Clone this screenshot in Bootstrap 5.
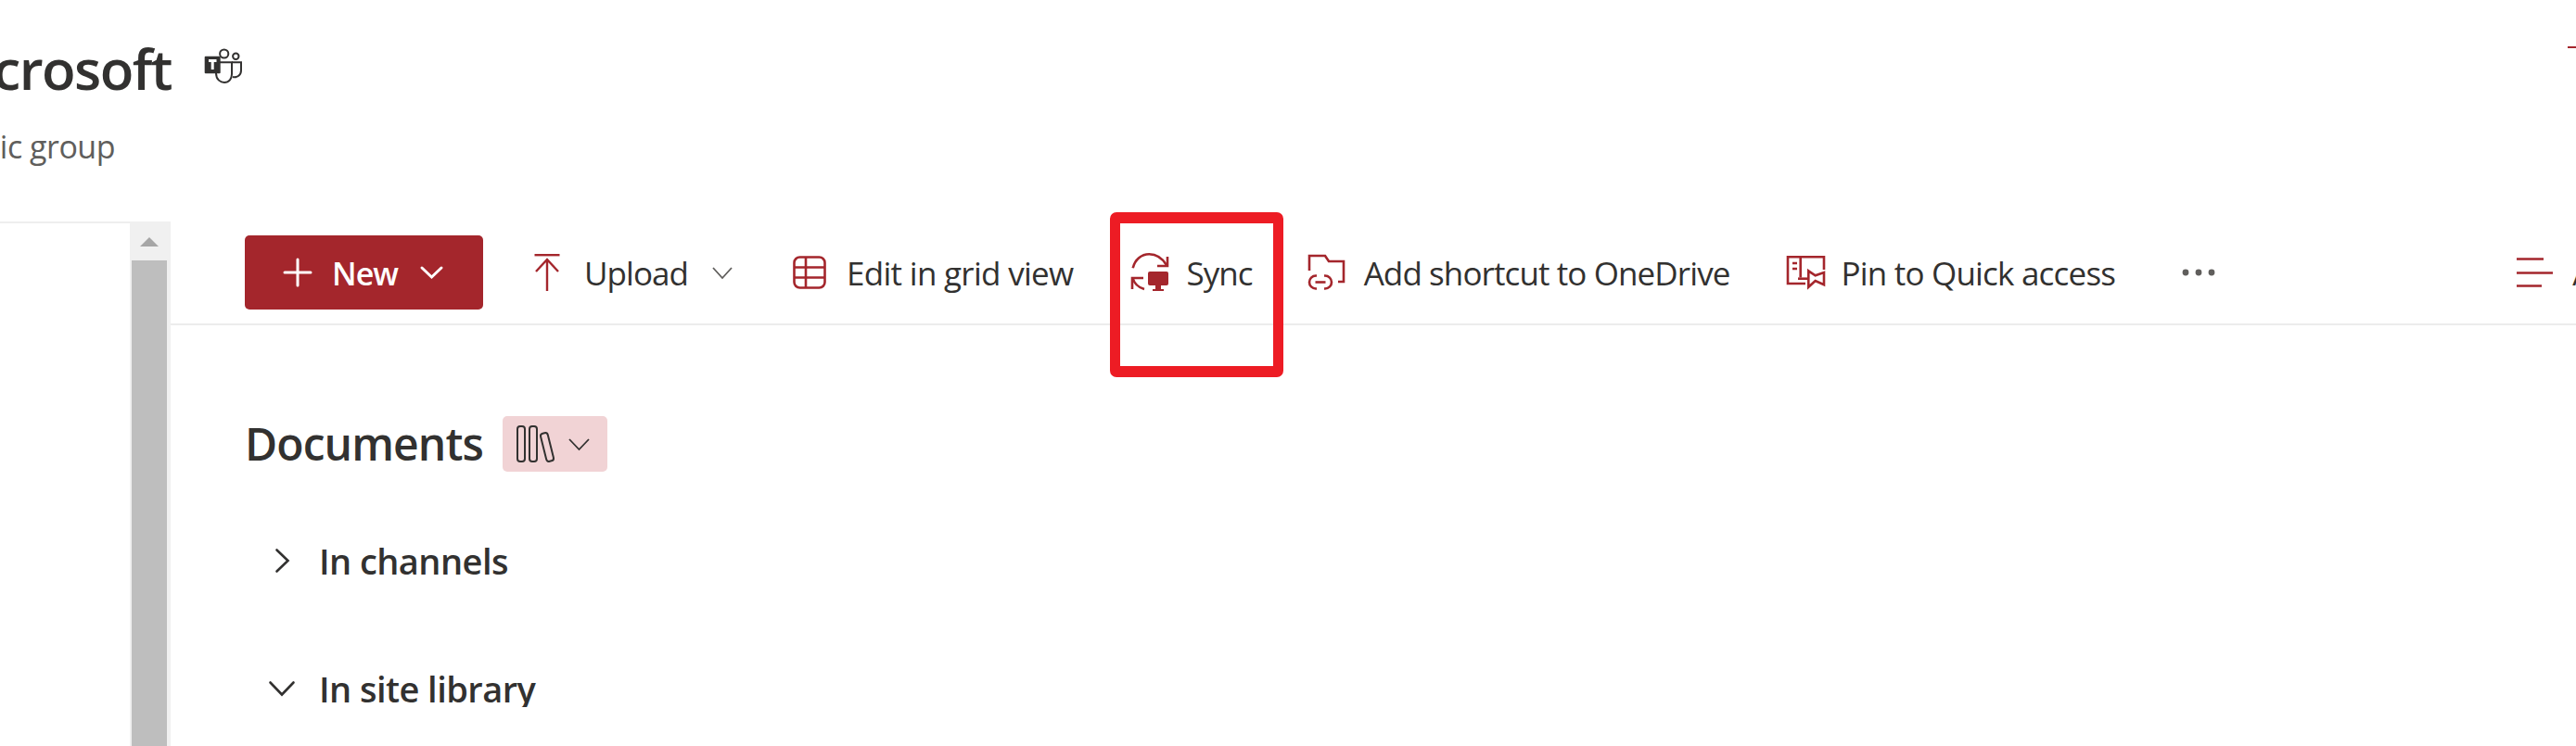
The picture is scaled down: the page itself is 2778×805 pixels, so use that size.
<!DOCTYPE html>
<html lang="en">

<head>
    <meta charset="UTF-8" />
    <title>Documents</title>
    <link href="https://cdn.jsdelivr.net/npm/bootstrap@5.3.3/dist/css/bootstrap.min.css" rel="stylesheet">
    <style>
        html, body { height: 805px; overflow: hidden; background: #fff; }
        body { font-family: "Open Sans", "Liberation Sans", sans-serif; color: #323130; }
        svg { display: block; flex-shrink: 0; overflow: visible; }

        .sp-page { position: relative; width: 2778px; height: 805px; overflow: hidden; }

        /* site header */
        .sp-header { height: 239px; }
        .sp-title-row { height: 64px; margin-top: 42px; }
        .sp-title-clip { width: 185px; white-space: nowrap; font-size: 60px; font-weight: 600; line-height: 64px; letter-spacing: -1.6px; }
        .sp-teams { margin-left: 33px; margin-top: 8px; }
        .sp-sub-clip { width: 124px; white-space: nowrap; font-size: 34px; line-height: 46px; margin-top: 29px; color: #605e5c; letter-spacing: -.5px; }
        .sp-corner { width: 9px; height: 2px; background: #a4262c; margin-top: 50px; }

        /* left panel */
        .sp-main { height: 566px; }
        .sp-nav { width: 140px; border-top: 2px solid #eee; }
        .sp-scroll { width: 44px; background: #f0f0f0; }
        .sp-scroll-up { height: 42px; padding-top: 17px; }
        .sp-scroll-tri { width: 0; height: 0; margin-left: 11px; border-left: 10px solid transparent; border-right: 10px solid transparent; border-bottom: 10px solid #a6a6a6; }
        .sp-scroll-thumb { width: 38px; margin-left: 2px; background: #bebebe; }

        /* command bar */
        .sp-content { width: 2594px; }
        .sp-bar { height: 112px; padding-left: 80px; border-bottom: 2px solid #ececec; white-space: nowrap; overflow: hidden; padding-top: 15px; padding-bottom: 15px; }
        .sp-new { width: 257px; height: 80px; background: #a4262c; border-radius: 5px; color: #fff; font-size: 34px; font-weight: 600; letter-spacing: -1px; padding: 0 0 0 41px; border: 0; }
        .sp-new span { margin-left: 21px; margin-right: 24px; padding-top: 3px; }
        .sp-cmd { font-size: 35px; letter-spacing: -.95px; line-height: 46px; flex-shrink: 0; }
        .sp-cmd span { padding-top: 2px; }
        .sp-cmd-upload { margin-left: 55px; }
        .sp-cmd-upload span { margin-left: 26px; margin-right: 26px; }
        .sp-cmd-grid { margin-left: 65px; }
        .sp-cmd-grid span { margin-left: 22px; letter-spacing: -.7px; }
        .sp-cmd-sync { margin-left: 62px; }
        .sp-cmd-short { margin-left: 58px; }
        .sp-cmd-short span { margin-left: 18px; letter-spacing: -.9px; }
        .sp-cmd-pin { margin-left: 60px; }
        .sp-cmd-pin span { letter-spacing: -.8px; }
        .sp-label-gap { margin-left: 16px; }
        .sp-more { margin-left: 72px; flex-shrink: 0; }
        .sp-sort { margin-left: 325px; }
        .sp-sort span { margin-left: 20px; }

        /* document area */
        .sp-docs { height: 412px; overflow: hidden; padding-left: 80px; padding-top: 98px; }
        .sp-doc-title { font-size: 48px; font-weight: 600; line-height: 60px; letter-spacing: -.9px; margin: 0; }
        .sp-view-pill { width: 113px; height: 60px; margin-left: 21px; background: #f1d3d5; border-radius: 5px; padding-left: 15px; }
        .sp-group { height: 60px; margin-top: 66px; padding-left: 26px; font-size: 38px; font-weight: 600; letter-spacing: -.55px; }
        .sp-group + .sp-group { margin-top: 78px; }
        .sp-group-ico { width: 28px; margin-right: 26px; }

        /* red annotation around Sync */
        .sp-callout { position: absolute; left: 1197px; top: 229px; width: 187px; height: 178px; border: solid #ed1c24; border-width: 12px 11px; border-radius: 7px; }
    </style>
</head>

<body>
    <div class="sp-page">
        <!-- header -->
        <div class="sp-header d-flex">
            <div>
                <div class="sp-title-row d-flex">
                    <div class="sp-title-clip d-flex justify-content-end">Microsoft</div>
                    <svg class="sp-teams" width="44" height="42" viewBox="0 0 44 42" fill="none" stroke="#323130" stroke-width="2">
                        <circle cx="23.7" cy="8" r="4.6" />
                        <circle cx="36.3" cy="10.7" r="3.2" />
                        <path d="M19 17.3H32V30C32 35 29 39 24 39C20 39 15 36 15 29" />
                        <path d="M32 17.3H42V26C42 31 38 34 33 33" />
                        <rect x="2.7" y="10.7" width="17" height="18.5" rx="1" fill="#323130" stroke="none" />
                        <path d="M7 15.5H15.5M11.2 15.5V25" stroke="#fff" stroke-width="3" />
                    </svg>
                </div>
                <div class="sp-sub-clip d-flex justify-content-end">Public group</div>
            </div>
            <div class="sp-corner ms-auto"></div>
        </div>

        <div class="sp-main d-flex">
            <!-- left panel -->
            <div class="sp-nav"></div>
            <div class="sp-scroll d-flex flex-column">
                <div class="sp-scroll-up">
                    <div class="sp-scroll-tri"></div>
                </div>
                <div class="sp-scroll-thumb flex-grow-1"></div>
            </div>

            <div class="sp-content">
                <!-- command bar -->
                <div class="sp-bar d-flex align-items-center">
                    <button type="button" class="sp-new btn d-flex align-items-center flex-shrink-0">
                        <svg width="32" height="32" viewBox="0 0 32 32" fill="none" stroke="#fff" stroke-width="3" stroke-linecap="round">
                            <path d="M16 2V30M2 16H30" />
                        </svg>
                        <span>New</span>
                        <svg width="25" height="14" viewBox="0 0 25 14" fill="none" stroke="#fff" stroke-width="3" stroke-linecap="round">
                            <path d="M2 2L12.5 12L23 2" />
                        </svg>
                    </button>

                    <div class="sp-cmd sp-cmd-upload d-flex align-items-center">
                        <svg width="28" height="40" viewBox="0 0 28 40" fill="none" stroke="#a4262c" stroke-width="2.4">
                            <path d="M0.5 1.2H27.5" />
                            <path d="M14 6V40M2 19L14 6L26 19" />
                        </svg>
                        <span>Upload</span>
                        <svg width="22" height="13" viewBox="0 0 22 13" fill="none" stroke="#605e5c" stroke-width="1.8">
                            <path d="M1 1L11 12L21 1" />
                        </svg>
                    </div>

                    <div class="sp-cmd sp-cmd-grid d-flex align-items-center">
                        <svg width="36" height="36" viewBox="0 0 36 36" fill="none" stroke="#a4262c" stroke-width="2.6">
                            <rect x="1.5" y="1.5" width="33" height="33" rx="6" />
                            <path d="M1.5 12.5H34.5M1.5 23.5H34.5M14 1.5V34.5" />
                        </svg>
                        <span>Edit in grid view</span>
                    </div>

                    <div class="sp-cmd sp-cmd-sync d-flex align-items-center">
                        <svg width="44" height="44" viewBox="0 0 44 44" fill="none" stroke="#a4262c" stroke-width="2.6">
                            <path d="M2.7 17.3C5 8 12 2.3 20.3 2.3C27 2.3 34 6 39 14" />
                            <path d="M40 5V15H29" />
                            <path d="M15 40C8 38 4 33 2.5 28" />
                            <path d="M14 28H2V40" />
                            <rect x="19" y="21" width="22" height="15" rx="2" fill="#a4262c" stroke="none" />
                            <path d="M27 36H33V40H36V42H24V40H27Z" fill="#a4262c" stroke="none" />
                        </svg>
                        <span class="sp-label-gap">Sync</span>
                    </div>

                    <div class="sp-cmd sp-cmd-short d-flex align-items-center">
                        <svg width="44" height="42" viewBox="0 0 44 42" fill="none" stroke="#a4262c" stroke-width="2.6">
                            <path d="M3 19V3H20L24 9H40V31H34" />
                            <path d="M11 24.5H10A7 7 0 0 0 10 38.5H11" />
                            <path d="M19 24.5H20A7 7 0 0 1 20 38.5H19" />
                            <path d="M9.5 31.5H20.5" />
                        </svg>
                        <span>Add shortcut to OneDrive</span>
                    </div>

                    <div class="sp-cmd sp-cmd-pin d-flex align-items-center">
                        <svg width="44" height="38" viewBox="0 0 44 38" fill="none" stroke="#a4262c" stroke-width="2.6">
                            <path d="M41 16V2.3H2V31H21" />
                            <path d="M15.7 2.3V24.5" />
                            <path d="M7 9H12M7 15H12" />
                            <path d="M13 25.7H25" />
                            <path d="M24.3 17.3L31.7 22.3L41 19V32.3L31.7 28L24.3 34.7Z" fill="#fff" />
                        </svg>
                        <span class="sp-label-gap">Pin to Quick access</span>
                    </div>

                    <svg class="sp-more" width="36" height="8" viewBox="0 0 36 8" fill="#605e5c">
                        <circle cx="4" cy="4" r="3.4" />
                        <circle cx="18" cy="4" r="3.4" />
                        <circle cx="32" cy="4" r="3.4" />
                    </svg>

                    <div class="sp-cmd sp-sort d-flex align-items-center">
                        <svg width="40" height="32" viewBox="0 0 40 32" fill="none" stroke="#a4262c" stroke-width="2.6">
                            <path d="M0 1.5H29M0 16.5H39M0 30.5H27" />
                        </svg>
                        <span>All Documents</span>
                    </div>
                </div>

                <!-- documents -->
                <div class="sp-docs">
                    <div class="d-flex align-items-center">
                        <h1 class="sp-doc-title">Documents</h1>
                        <div class="sp-view-pill d-flex align-items-center">
                            <svg width="40" height="40" viewBox="0 0 40 40" fill="none" stroke="#323130" stroke-width="2">
                                <rect x="1" y="1" width="8" height="38" rx="3" />
                                <rect x="14" y="1" width="8" height="38" rx="3" />
                                <rect x="29" y="8" width="8" height="31" rx="3" transform="rotate(-14 33 23.5)" />
                            </svg>
                            <svg class="ms-3" width="23" height="13" viewBox="0 0 23 13" fill="none" stroke="#323130" stroke-width="1.8">
                                <path d="M1 1L11.5 12L22 1" />
                            </svg>
                        </div>
                    </div>

                    <div class="sp-group d-flex align-items-center">
                        <div class="sp-group-ico d-flex justify-content-center">
                            <svg width="15" height="26" viewBox="0 0 15 26" fill="none" stroke="#323130" stroke-width="2.6" stroke-linecap="round">
                                <path d="M1.5 1.5L13.5 13L1.5 24.5" />
                            </svg>
                        </div>
                        <span>In channels</span>
                    </div>
                    <div class="sp-group d-flex align-items-center">
                        <div class="sp-group-ico d-flex justify-content-center">
                            <svg width="28" height="16" viewBox="0 0 28 16" fill="none" stroke="#323130" stroke-width="2.6" stroke-linecap="round">
                                <path d="M1.5 1.5L14 14.5L26.5 1.5" />
                            </svg>
                        </div>
                        <span>In site library</span>
                    </div>
                </div>
            </div>
        </div>

        <div class="sp-callout"></div>
    </div>

    <script src="https://cdn.jsdelivr.net/npm/bootstrap@5.3.3/dist/js/bootstrap.bundle.min.js"></script>
</body>

</html>
